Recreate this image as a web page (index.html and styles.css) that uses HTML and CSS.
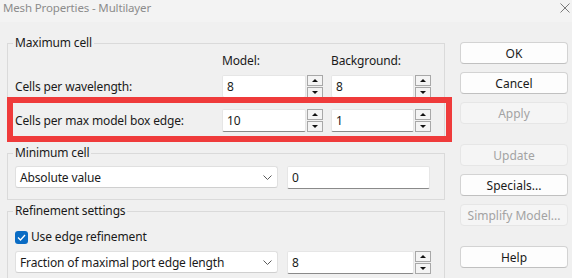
FILE: index.html
```html
<!DOCTYPE html>
<html>
<head>
<meta charset="utf-8">
<link rel="stylesheet" href="styles.css">
</head>
<body>
<div class="titlebar">
  <span class="title">Mesh Properties - Multilayer</span>
  <svg class="close" width="10" height="10" viewBox="0 0 10 10"><path d="M0.5 0.5L9.5 9.5M9.5 0.5L0.5 9.5" stroke="#7a7a7a" stroke-width="1" fill="none"/></svg>
</div>
<div class="main">
  <div class="left">
    <fieldset class="group g1">
      <legend>Maximum cell</legend>
      <div class="grid">
        <span></span><span class="hdr">Model:</span><span class="hdr">Background:</span>
      </div>
      <div class="grid row1">
        <span class="lbl">Cells per wavelength:</span>
        <div class="spin"><div class="field">8</div><div class="btns"><div class="sb up"></div><div class="sb down"></div></div></div>
        <div class="spin"><div class="field">8</div><div class="btns"><div class="sb up"></div><div class="sb down"></div></div></div>
      </div>
      <div class="grid row2">
        <span class="lbl">Cells per max model box edge:</span>
        <div class="spin"><div class="field">10</div><div class="btns"><div class="sb up"></div><div class="sb down"></div></div></div>
        <div class="spin"><div class="field">1</div><div class="btns"><div class="sb up"></div><div class="sb down"></div></div></div>
      </div>
    </fieldset>
    <fieldset class="group g2">
      <legend>Minimum cell</legend>
      <div class="line">
        <div class="combo"><span>Absolute value</span><svg width="9" height="5" viewBox="0 0 9 5"><path d="M0.5 0.5L4.5 4.5L8.5 0.5" stroke="#5a5a5a" fill="none"/></svg></div>
        <div class="field solo">0</div>
      </div>
    </fieldset>
    <fieldset class="group g3">
      <legend>Refinement settings</legend>
      <label class="check"><span class="box"><svg width="9" height="7" viewBox="0 0 9 7"><path d="M1 3.5L3.5 6L8 1" stroke="#fff" stroke-width="1.3" fill="none"/></svg></span>Use edge refinement</label>
      <div class="line l3">
        <div class="combo"><span>Fraction of maximal port edge length</span><svg width="9" height="5" viewBox="0 0 9 5"><path d="M0.5 0.5L4.5 4.5L8.5 0.5" stroke="#5a5a5a" fill="none"/></svg></div>
        <div class="spin wide"><div class="field">8</div><div class="btns"><div class="sb up"></div><div class="sb down"></div></div></div>
      </div>
    </fieldset>
  </div>
  <div class="right">
    <button class="btn">OK</button>
    <button class="btn">Cancel</button>
    <button class="btn dis">Apply</button>
    <button class="btn dis sep">Update</button>
    <button class="btn">Specials...</button>
    <button class="btn dis">Simplify Model...</button>
    <button class="btn sep">Help</button>
  </div>
</div>
<div class="highlight"></div>
</body>
</html>
```
FILE: styles.css
```css
html, body {
  margin: 0;
  padding: 0;
}
body {
  width: 572px;
  height: 278px;
  overflow: hidden;
  background: #f0f0f0;
  font-family: "Noto Sans", "Open Sans", sans-serif;
  font-size: 12px;
  letter-spacing: -0.15px;
  color: #1a1a1a;
  position: relative;
}
.titlebar {
  height: 22px;
  background: #f3f3f3;
  display: flex;
  justify-content: space-between;
  align-items: flex-start;
  padding: 0 2px 0 3px;
  box-sizing: border-box;
}
.title {
  line-height: 16px;
  font-size: 11.5px;
  color: #8c8c8c;
}
.close {
  margin-top: 3px;
}
.main {
  display: flex;
  padding: 13px 0 0 7px;
  gap: 15px;
}
.left {
  width: 438px;
  display: flex;
  flex-direction: column;
  gap: 3px;
}
.group {
  margin: 0;
  border: 1px solid #dadada;
  padding: 0 6px 0 7px;
  min-width: 0;
}
.group legend {
  padding: 0 2px;
  margin-left: -2px;
  line-height: 16px;
}
.g1 {
  padding-top: 2px;
  padding-bottom: 9px;
}
.g2 {
  padding-top: 5px;
  padding-bottom: 10px;
}
.g3 {
  padding-top: 10px;
  padding-bottom: 10px;
}
.grid {
  display: grid;
  grid-template-columns: 199px 101px 100px;
  column-gap: 8px;
  align-items: center;
  line-height: 16px;
}
.row1 {
  margin-top: 6px;
}
.row2 {
  margin-top: 11px;
}
.spin {
  display: flex;
  height: 23px;
}
.field {
  flex: 1;
  background: #fff;
  border: 1px solid #e6e6e6;
  border-bottom-color: #8a8a8a;
  border-radius: 2px;
  padding-left: 4px;
  line-height: 21px;
  box-sizing: border-box;
  height: 23px;
}
.btns {
  width: 16px;
  margin-left: 1px;
  display: flex;
  flex-direction: column;
  gap: 1px;
}
.sb {
  flex: 1;
  border: 1px solid #a8a8a8;
  background: #f4f4f4;
  position: relative;
}
.sb::after {
  content: "";
  position: absolute;
  left: 4px;
  top: 3px;
  border-left: 3px solid transparent;
  border-right: 3px solid transparent;
}
.up::after {
  border-bottom: 3px solid #111;
}
.down::after {
  border-top: 3px solid #111;
}
.line {
  display: flex;
  gap: 9px;
  align-items: flex-start;
}
.combo {
  width: 263px;
  height: 22px;
  box-sizing: border-box;
  background: #fff;
  border: 1px solid #e0e0e0;
  border-bottom-color: #cfcfcf;
  border-radius: 3px;
  display: flex;
  align-items: center;
  justify-content: space-between;
  padding: 0 5px 0 4px;
}
.solo {
  flex: none;
  width: 143px;
}
.wide {
  width: 144px;
}
.check {
  display: flex;
  align-items: center;
  gap: 3px;
  line-height: 16px;
}
.box {
  width: 13px;
  height: 13px;
  background: #0a6cc4;
  border-radius: 3px;
  display: flex;
  align-items: center;
  justify-content: center;
}
.l3 {
  margin-top: 6px;
}
.right {
  width: 108px;
  padding-top: 7px;
  display: flex;
  flex-direction: column;
  gap: 8px;
}
.btn {
  height: 22px;
  margin: 0;
  padding: 0;
  font: inherit;
  color: #1a1a1a;
  background: #fdfdfd;
  border: 1px solid #d3d3d3;
  border-bottom-color: #c0c0c0;
  border-radius: 4px;
}
.btn.dis {
  background: #f5f5f5;
  border-color: #e6e6e6;
  color: #a3a3a3;
}
.btn.sep {
  margin-top: 12px;
}
.highlight {
  position: absolute;
  left: 7px;
  top: 97px;
  width: 445px;
  height: 45px;
  box-sizing: border-box;
  border: 6px solid #ef3b3b;
}
```
